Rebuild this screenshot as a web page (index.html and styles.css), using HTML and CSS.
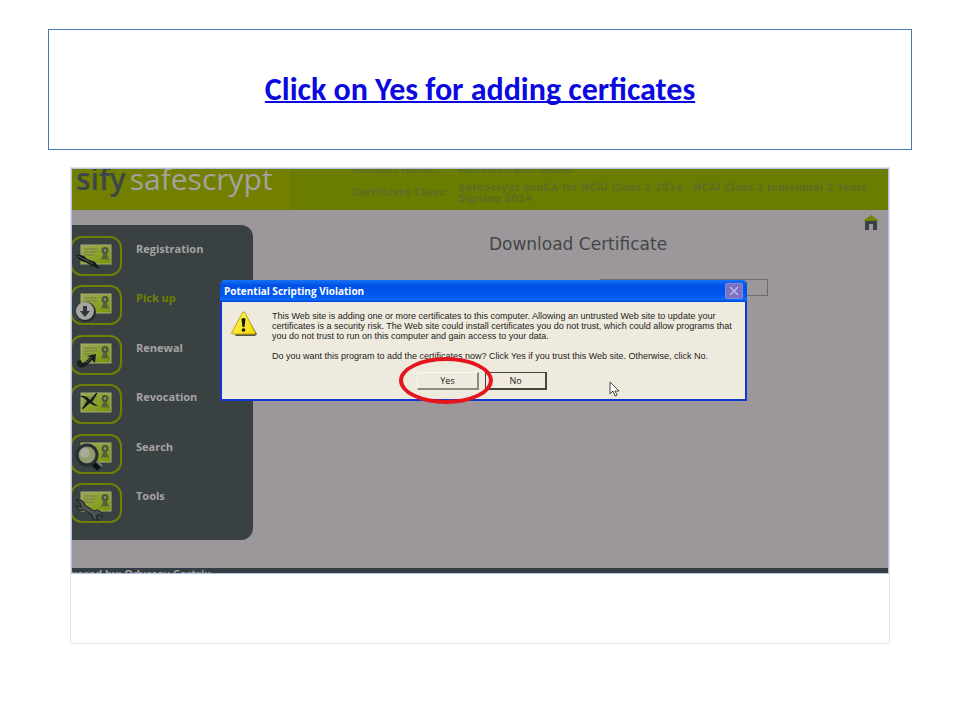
FILE: index.html
```html
<!DOCTYPE html>
<html lang="en">
<head>
    <meta charset="UTF-8">
    <meta name="viewport" content="width=device-width, initial-scale=1.0">
    <title>Click on Yes for adding cerficates</title>
    <link rel="stylesheet" href="styles.css">
</head>
<body>
    <svg class="defs" width="0" height="0" aria-hidden="true">
        <defs>
            <linearGradient id="paper" x1="0" y1="0" x2="1" y2="1">
                <stop offset="0" stop-color="#9aa858"/>
                <stop offset="0.5" stop-color="#8ea22f"/>
                <stop offset="1" stop-color="#78920a"/>
            </linearGradient>
            <linearGradient id="warn" x1="0" y1="0" x2="1" y2="1">
                <stop offset="0" stop-color="#fff76a"/>
                <stop offset="1" stop-color="#f5d800"/>
            </linearGradient>
            <g id="cert">
                <rect x="-1" y="1" width="50" height="38" rx="11" fill="none" stroke="#6f8200" stroke-width="2"/>
                <rect x="9" y="9" width="30" height="19" fill="url(#paper)" stroke="#a4ae78" stroke-width="1"/>
                <path d="M12 13h13M12 16h13M12 19h10" stroke="#7d8b42" stroke-width="1.5"/>
                <path d="M32 16l-3 8 3-1 1 1 1-1 3 1-3-8z" fill="#566339"/>
                <circle cx="33" cy="14.500" r="3.500" fill="#4c573e"/>
                <circle cx="33" cy="14.500" r="1.300" fill="#8b9a5c"/>
            </g>
        </defs>
    </svg>

    <header class="title-box">
        <h1><a href="#certificate">Click on Yes for adding cerficates</a></h1>
    </header>

    <main class="content-box" id="certificate">
        <div class="site">
            <div class="banner">
                <div class="logo"><b>sify</b> <span>safescrypt</span></div>
                <dl class="cert-info">
                    <dt>Account Name:</dt>
                    <dd>Administrator Name</dd>
                    <dt class="class-label">Certificate Class:</dt>
                    <dd>SafeScrypt subCA for RCAI Class 2 2014 - RCAI Class 2 Individual 2 Years Signing 2014</dd>
                </dl>
            </div>

            <div class="page">
                <nav class="sidebar">
                    <a href="#registration">
                        <svg width="51" height="40" viewBox="0 0 51 40">
                            <use href="#cert"/>
                            <path d="M4 19q7-1 11 4l8 3 5 7-8-3-7-4q-6-1-9-7z" fill="#15191a"/>
                            <path d="M6 20l15 8" stroke="#5b6265" stroke-width="1"/>
                        </svg>
                        Registration
                    </a>
                    <a href="#pickup" class="active">
                        <svg width="51" height="40" viewBox="0 0 51 40">
                            <use href="#cert"/>
                            <circle cx="14" cy="27" r="10" fill="#24292b"/>
                            <circle cx="13" cy="26" r="9" fill="#a5a5a1"/>
                            <path d="M11 21h4v5h3l-5 6-5-6h3z" fill="#303638"/>
                        </svg>
                        Pick up
                    </a>
                    <a href="#renewal">
                        <svg width="51" height="40" viewBox="0 0 51 40">
                            <use href="#cert"/>
                            <path d="M5 26l4-1q0 4 4 2l5-5-3-1 9-2-1 9-3-3-6 6q-7 4-9-2z" fill="#171c1d"/>
                            <path d="M14 28l6-6" stroke="#555d60" stroke-width="1"/>
                        </svg>
                        Renewal
                    </a>
                    <a href="#revocation">
                        <svg width="51" height="40" viewBox="0 0 51 40">
                            <use href="#cert"/>
                            <path d="M7 12q7-1 11 4l6-7q2-1 1 1l-5 8 6 4q-5 0-8-3l-7 6q-2 0 0-2l4-6q-3-4-8-5z" fill="#141819"/>
                        </svg>
                        Revocation
                    </a>
                    <a href="#search">
                        <svg width="51" height="40" viewBox="0 0 51 40">
                            <use href="#cert"/>
                            <path d="M20 28l7 7" stroke="#0c0f10" stroke-width="5"/>
                            <path d="M23 26l7 6" stroke="#72777a" stroke-width="2"/>
                            <circle cx="15" cy="21" r="11" fill="#7c8285"/>
                            <circle cx="15" cy="21" r="10" fill="none" stroke="#272d30" stroke-width="3"/>
                            <circle cx="15" cy="21" r="8" fill="#8f9b6a"/>
                            <circle cx="13" cy="19" r="5" fill="#a8ab98"/>
                        </svg>
                        Search
                    </a>
                    <a href="#tools">
                        <svg width="51" height="40" viewBox="0 0 51 40">
                            <use href="#cert"/>
                            <path d="M4 17l4 3 1 4-5-1q2 6 8 4l8 5q0 6 6 5l-2-4 3-2 3 3q1-6-5-7l-3 1-9-6q-1-6-9-5z" fill="#4d5355" stroke="#191e20" stroke-width="1"/>
                        </svg>
                        Tools
                    </a>
                </nav>

                <section class="download">
                    <a class="home" href="#home" aria-label="Home">
                        <svg width="16" height="16" viewBox="0 0 16 16">
                            <path d="M2 6h12v9h-4v-6h-4v6h-4z" fill="#364143"/>
                            <path d="M0 6l8-6 8 6z" fill="#6f8500"/>
                        </svg>
                    </a>
                    <h2>Download Certificate</h2>
                    <input class="pin" type="text" aria-label="Certificate PIN">
                </section>
            </div>

            <footer class="powered">Powered by: Odyssey Certrix</footer>

            <div class="dialog" role="dialog" aria-labelledby="dialogTitle">
                <div class="dialog-bar">
                    <h3 id="dialogTitle">Potential Scripting Violation</h3>
                    <button class="close" type="button" aria-label="Close">
                        <svg width="10" height="10" viewBox="0 0 10 10"><path d="M1 1l8 8M9 1l-8 8" stroke="#c1b9e6" stroke-width="1.500"/></svg>
                    </button>
                </div>
                <div class="dialog-body">
                    <svg class="warning" width="26" height="25" viewBox="0 0 26 25">
                        <path d="M14 3l12 20-2 2h-20z" fill="#55534e"/>
                        <path d="M12 1q1-1 2 1l10 19q1 2-1 2h-21q-2 0-1-2z" fill="url(#warn)" stroke="#c2a60b" stroke-width="1"/>
                        <path d="M10.500 8q2-2 4 0l-1 8h-2z" fill="#161500"/>
                        <circle cx="12.500" cy="19" r="1.800" fill="#161500"/>
                    </svg>
                    <div class="message">
                        <p>This Web site is adding one or more certificates to this computer. Allowing an untrusted Web site to update your<br>
                        certificates is a security risk. The Web site could install certificates you do not trust, which could allow programs that<br>
                        you do not trust to run on this computer and gain access to your data.</p>
                        <p>Do you want this program to add the certificates now? Click Yes if you trust this Web site. Otherwise, click No.</p>
                    </div>
                </div>
                <div class="actions">
                    <div class="marked">
                        <button type="button">Yes</button>
                        <span class="ring"></span>
                    </div>
                    <button type="button" class="default">No</button>
                </div>
                <svg class="cursor" width="11" height="18" viewBox="0 0 11 18">
                    <path d="M1 1v12l3-3 2 5 2-1-2-4h4z" fill="#fff" stroke="#444" stroke-width="1"/>
                </svg>
            </div>
        </div>
    </main>
</body>
</html>
```

FILE: styles.css
```css
* {
    box-sizing: border-box;
}

body {
    margin: 0;
    padding: 29px 48px;
    background-color: #fff;
    font-family: "Open Sans", "Noto Sans", sans-serif;
}

h1, h2, h3, p, dl, dd {
    margin: 0;
}

.defs {
    position: absolute;
}

.title-box {
    display: flex;
    justify-content: center;
    align-items: center;
    min-height: 121px;
    border: 1px solid #4a74b4;
}

.title-box h1 {
    font-family: Carlito, Lato, sans-serif;
    font-size: 32px;
    line-height: 36px;
}

.title-box a {
    color: #0a0ae0;
    text-decoration: underline;
    text-decoration-thickness: 2px;
    text-decoration-skip-ink: none;
}

.content-box {
    margin: 17px 22px 0;
    padding: 1px 1px 70px;
    border: 1px solid #e2e5ea;
}

/* web site behind the dialog */
.site {
    position: relative;
    overflow: hidden;
    background-color: #9b979a;
    outline: 1px solid #b4c3e4;
}

.banner {
    display: flex;
    height: 41px;
    overflow: hidden;
    background: linear-gradient(to right, #727f00 218px, #6a7d00 218px);
}

.logo {
    width: 280px;
    flex-shrink: 0;
    padding-left: 4px;
    margin-top: -10px;
    font-size: 30px;
    line-height: 40px;
    word-spacing: -4px;
    color: #a5a29e;
    white-space: nowrap;
}

.logo b {
    font-weight: 600;
    color: #3c474c;
}

.cert-info {
    flex: 1;
    display: grid;
    grid-template-columns: 106px 1fr;
    margin-top: -5px;
    padding-right: 12px;
    font-family: "DejaVu Sans", sans-serif;
    font-size: 10px;
    font-weight: bold;
    line-height: 11px;
    color: #5e6d22;
}

.cert-info dt,
.cert-info dd {
    padding-bottom: 4px;
}

.cert-info .class-label {
    padding-top: 5px;
}

.page {
    display: flex;
    padding: 15px 0 28px;
}

.sidebar {
    display: flex;
    flex-direction: column;
    justify-content: space-between;
    width: 181px;
    height: 315px;
    flex-shrink: 0;
    padding: 11px 0 17px;
    border-radius: 0 12px 12px 0;
    background-color: #3a4143;
}

.sidebar a {
    display: flex;
    gap: 13px;
    font-size: 11px;
    font-weight: bold;
    line-height: 26px;
    color: #a5a3a4;
    text-decoration: none;
}

.sidebar a.active {
    color: #6f8200;
}

.download {
    flex: 1;
    display: flex;
    flex-direction: column;
    align-items: center;
}

.home {
    align-self: flex-end;
    height: 16px;
    margin: -11px 9px 0 0;
}

.download h2 {
    margin-top: 2px;
    font-family: "DejaVu Sans", sans-serif;
    font-size: 17px;
    font-weight: normal;
    line-height: 24px;
    color: #454649;
    margin-right: -15px;
}

.pin {
    width: 168px;
    height: 17px;
    margin: 23px -227px 0 0;
    border: 1px solid #6d6b6e;
    background: transparent;
}

.powered {
    height: 5px;
    overflow: hidden;
    background-color: #343e40;
    color: #a5a3a4;
    font-size: 11px;
    font-weight: bold;
    line-height: 11px;
    text-indent: -18px;
}

/* dialog window */
.dialog {
    position: absolute;
    top: 111px;
    left: 148px;
    width: 527px;
    border: 2px solid #1238cf;
    border-top: 0;
    border-radius: 5px 5px 0 0;
    background-color: #eeeade;
}

.dialog-bar {
    display: flex;
    justify-content: space-between;
    align-items: center;
    height: 22px;
    margin: 0 -2px;
    padding: 0 4px;
    border-radius: 5px 5px 0 0;
    background: linear-gradient(#1673f5, #0050e4 25%, #0058f2 70%, #0a6aff 90%, #003fd0);
}

.dialog-bar h3 {
    font-size: 10px;
    line-height: 14px;
    color: #fff;
}

.close {
    display: flex;
    justify-content: center;
    align-items: center;
    width: 18px;
    height: 16px;
    padding: 0;
    border: 1px solid #8a86d8;
    border-radius: 2px;
    background-color: #7b71c4;
}

.dialog-body {
    display: flex;
    gap: 15px;
    padding: 9px 8px 0 9px;
}

.warning {
    flex-shrink: 0;
}

.message {
    font-family: "Liberation Sans", Arial, sans-serif;
    font-size: 9px;
    line-height: 10px;
    color: #1d1c1a;
    white-space: nowrap;
}

.message p + p {
    margin-top: 10px;
}

.actions {
    display: flex;
    justify-content: center;
    gap: 6px;
    padding: 11px 3px 9px 0;
}

.actions button {
    display: block;
    width: 62px;
    height: 18px;
    padding: 0;
    border: 1px solid #f8f7f2;
    border-right: 2px solid #8d8a80;
    border-bottom: 2px solid #8d8a80;
    background-color: #eeeade;
    font-family: inherit;
    font-size: 9px;
    line-height: 12px;
    color: #1d1c1a;
}

.actions .default {
    border: 1px solid #45443f;
    border-right-width: 2px;
    border-bottom-width: 2px;
}

.marked {
    position: relative;
}

.ring {
    position: absolute;
    inset: -15px -14px -14px -18px;
    border: 4px solid #e4151d;
    border-radius: 50%;
    pointer-events: none;
}

.cursor {
    position: absolute;
    right: 125px;
    bottom: 0;
}
```
